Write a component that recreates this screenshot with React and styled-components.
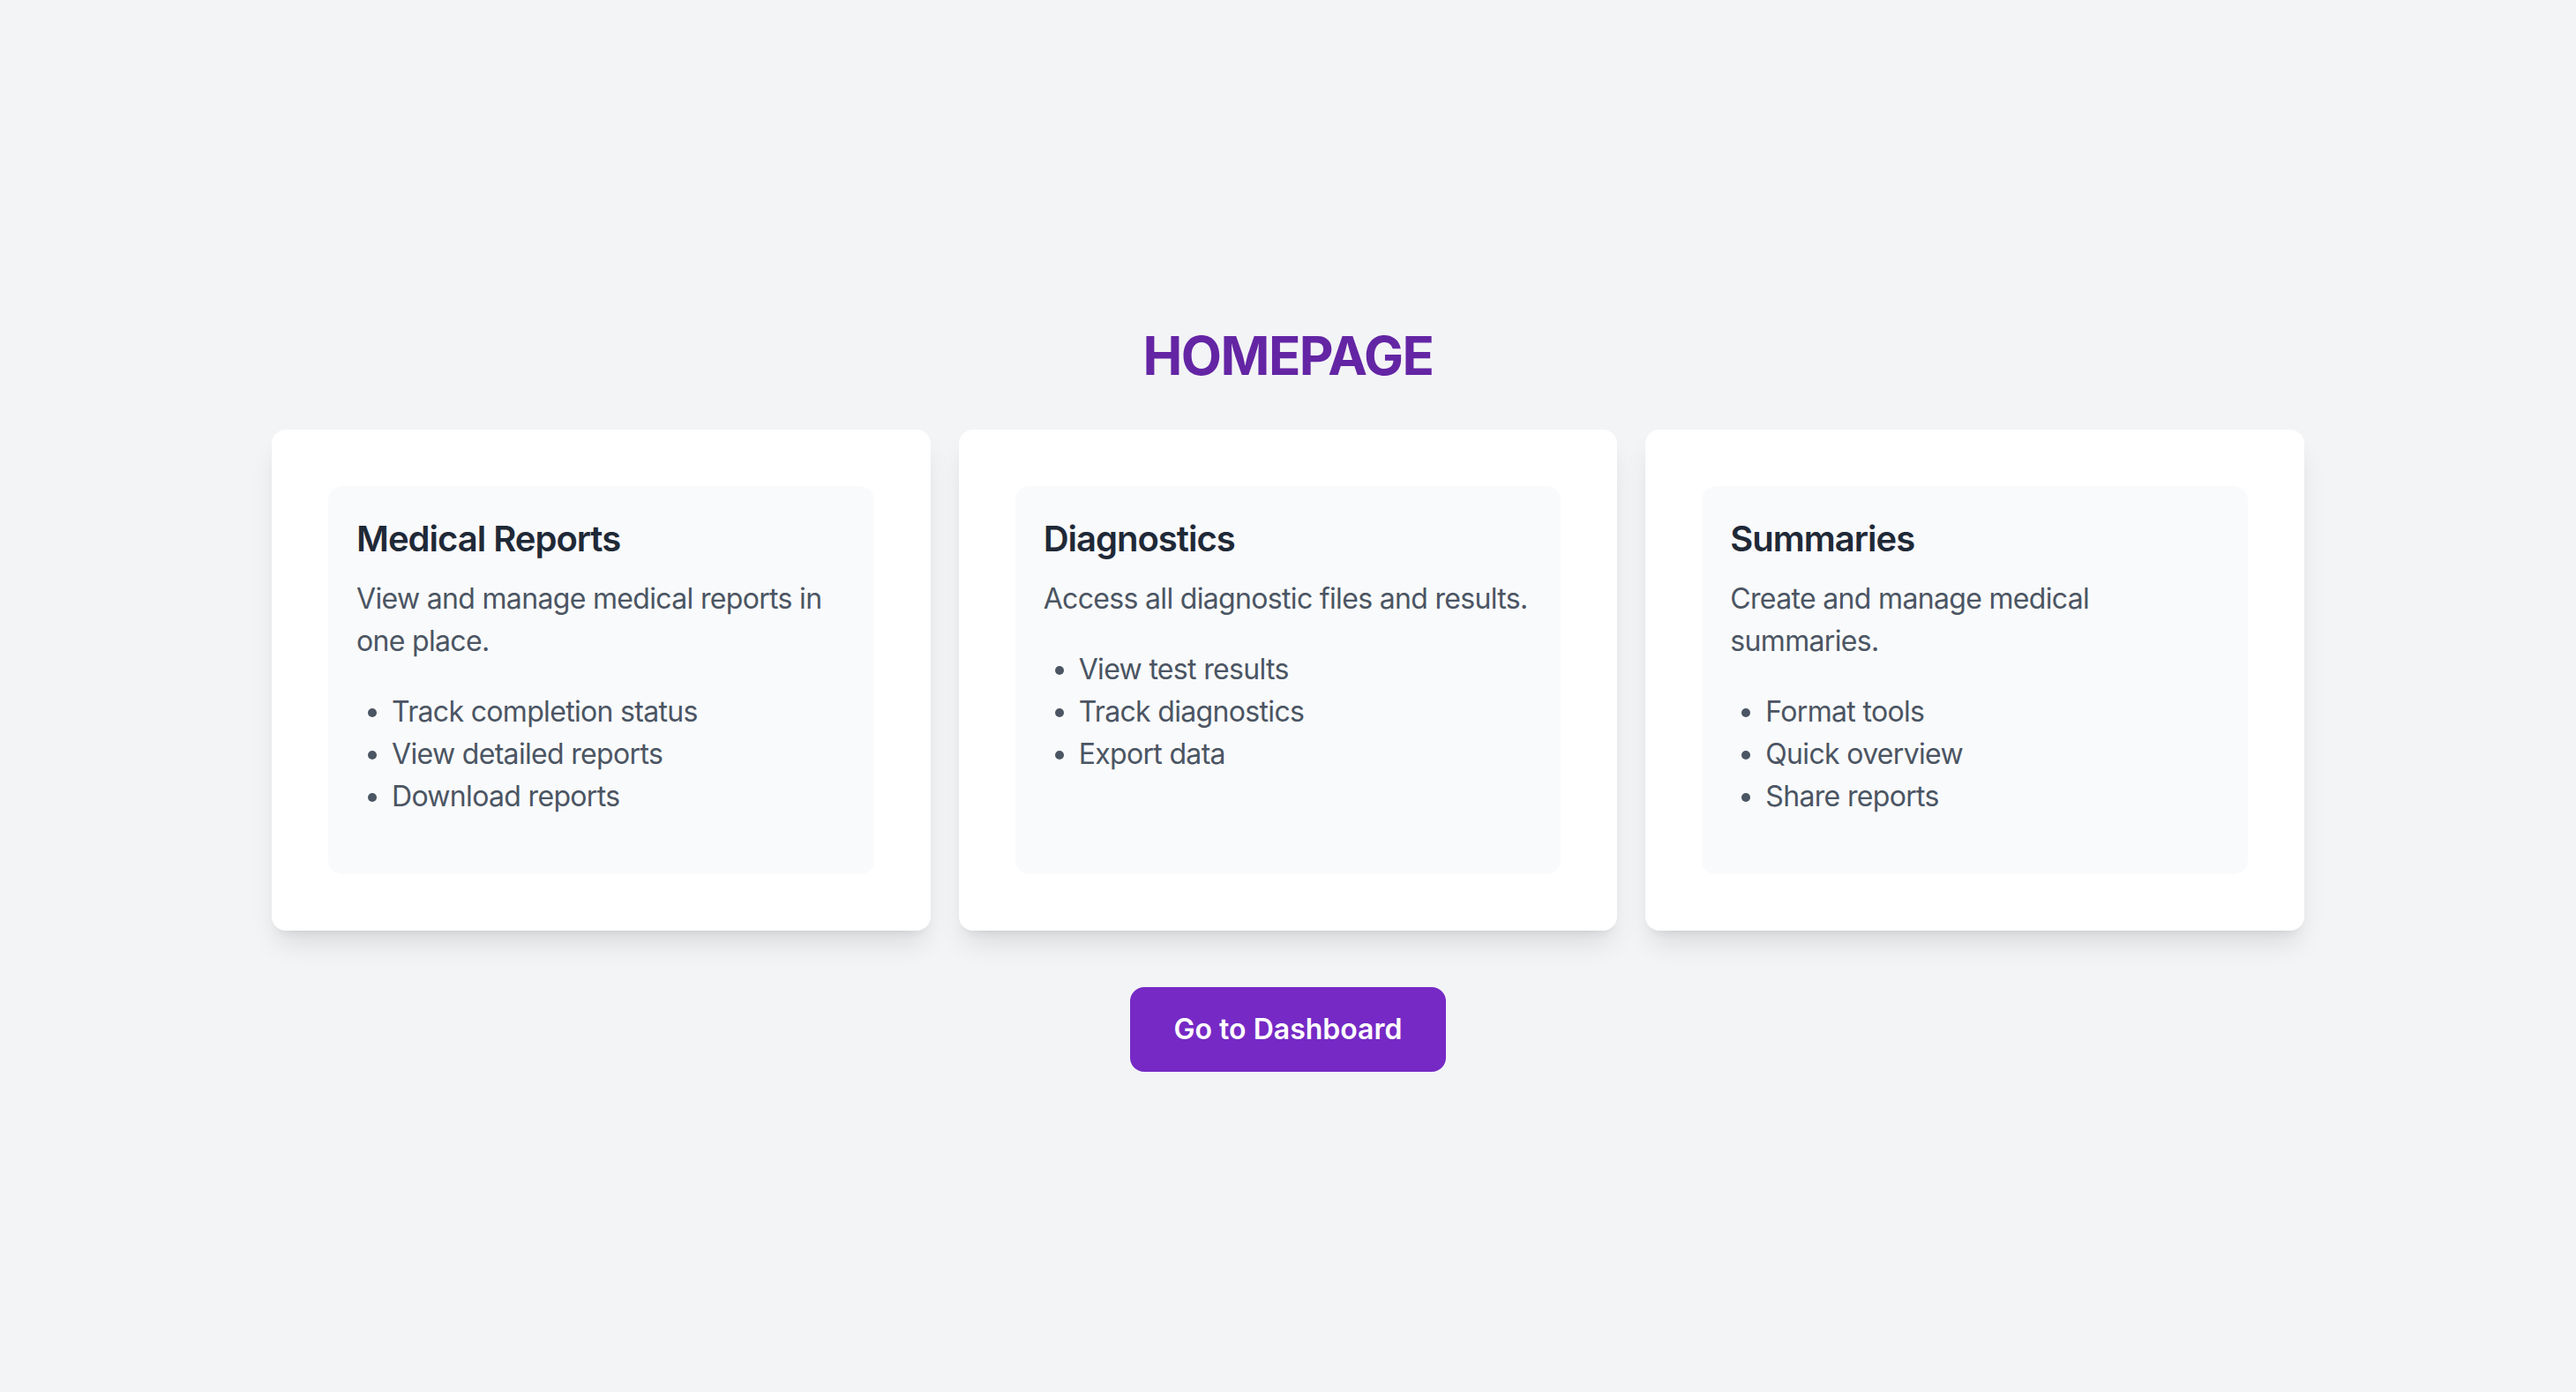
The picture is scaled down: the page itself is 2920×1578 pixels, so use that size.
import React from "react";
import styled, { createGlobalStyle } from "styled-components";

const GlobalStyle = createGlobalStyle`
  * { box-sizing: border-box; }
  html, body { margin: 0; padding: 0; }
  body {
    background: #f3f4f6;
    font-family: Inter, "Noto Sans", "Liberation Sans", sans-serif;
    -webkit-font-smoothing: antialiased;
  }
`;

const Page = styled.main`
  min-height: 100vh;
  display: flex;
  flex-direction: column;
  align-items: center;
  justify-content: center;
  padding: 4px 32px 0;
`;

const Title = styled.h1`
  margin: 0 0 48px;
  font-size: 60px;
  line-height: 72px;
  font-weight: 700;
  color: #6425a4;
  letter-spacing: -0.025em;
`;

const Grid = styled.section`
  width: 100%;
  max-width: 2304px;
  display: grid;
  grid-template-columns: repeat(3, 1fr);
  gap: 32px;
`;

const Card = styled.article`
  background: #ffffff;
  border-radius: 16px;
  padding: 64px;
  display: flex;
  flex-direction: column;
  box-shadow: 0 20px 30px -6px rgba(0, 0, 0, 0.1),
    0 8px 12px -8px rgba(0, 0, 0, 0.1);
`;

const Inner = styled.div`
  flex: 1;
  background: #f9fafb;
  border-radius: 16px;
  padding: 32px;
`;

const CardTitle = styled.h2`
  margin: 0 0 16px;
  font-size: 40px;
  line-height: 56px;
  font-weight: 600;
  color: #1f2937;
  letter-spacing: -0.025em;
`;

const Desc = styled.p`
  margin: 0;
  font-size: 32px;
  line-height: 48px;
  color: #4b5563;
  letter-spacing: -0.021em;
`;

const List = styled.ul`
  margin: 32px 0;
  padding-left: 40px;
  list-style: disc;
  color: #4b5563;
  font-size: 32px;
  line-height: 48px;
  letter-spacing: -0.021em;
`;

const Item = styled.li``;

const Button = styled.button`
  margin-top: 64px;
  border: none;
  border-radius: 16px;
  background: #7629c5;
  color: #ffffff;
  font-family: inherit;
  font-size: 32px;
  line-height: 48px;
  font-weight: 600;
  padding: 24px 50px;
  cursor: pointer;
`;

const cards = [
  {
    title: "Medical Reports",
    desc: "View and manage medical reports in one place.",
    items: ["Track completion status", "View detailed reports", "Download reports"],
  },
  {
    title: "Diagnostics",
    desc: "Access all diagnostic files and results.",
    items: ["View test results", "Track diagnostics", "Export data"],
  },
  {
    title: "Summaries",
    desc: "Create and manage medical summaries.",
    items: ["Format tools", "Quick overview", "Share reports"],
  },
];

export default function App() {
  return (
    <>
      <GlobalStyle />
      <Page>
        <Title>HOMEPAGE</Title>
        <Grid>
          {cards.map((c) => (
            <Card key={c.title}>
              <Inner>
                <CardTitle>{c.title}</CardTitle>
                <Desc>{c.desc}</Desc>
                <List>
                  {c.items.map((i) => (
                    <Item key={i}>{i}</Item>
                  ))}
                </List>
              </Inner>
            </Card>
          ))}
        </Grid>
        <Button>Go to Dashboard</Button>
      </Page>
    </>
  );
}
